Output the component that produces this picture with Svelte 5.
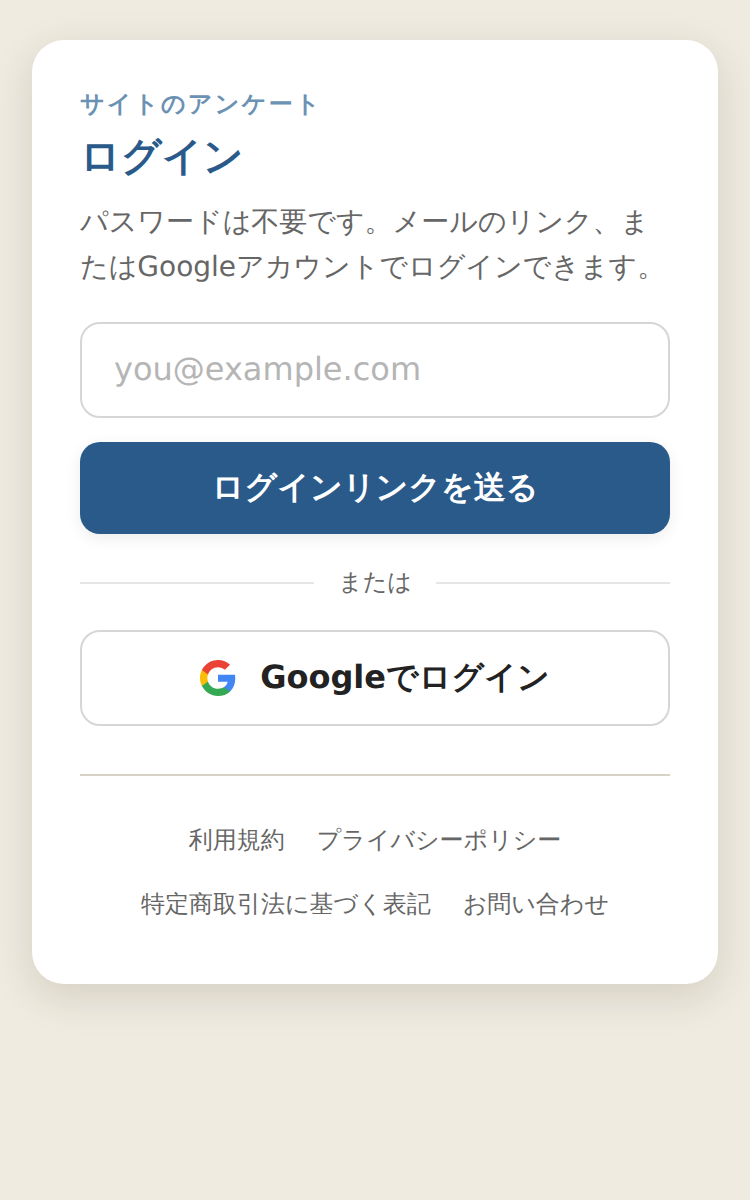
<script>
  const rows = [
    ['利用規約', 'プライバシーポリシー'],
    ['特定商取引法に基づく表記', 'お問い合わせ']
  ];
</script>

<main class="card">
  <p class="eyebrow">サイトのアンケート</p>
  <h1>ログイン</h1>
  <p class="lead">パスワードは不要です。メールのリンク、またはGoogleアカウントでログインできます。</p>
  <form class="form" onsubmit={(e) => e.preventDefault()}>
    <input type="email" placeholder="you@example.com" />
    <button class="primary" type="submit">ログインリンクを送る</button>
  </form>
  <div class="divider"><span>または</span></div>
  <button class="google" type="button">
    <svg viewBox="0 0 18 18" width="36" height="36" aria-hidden="true">
      <path fill="#4285F4" d="M17.64 9.2c0-.637-.057-1.251-.164-1.84H9v3.481h4.844c-.209 1.125-.843 2.078-1.796 2.717v2.258h2.908c1.702-1.567 2.684-3.874 2.684-6.615z"/>
      <path fill="#34A853" d="M9 18c2.43 0 4.467-.806 5.956-2.18l-2.908-2.259c-.806.54-1.837.86-3.048.86-2.344 0-4.328-1.584-5.036-3.711H.957v2.332C2.438 15.983 5.482 18 9 18z"/>
      <path fill="#FBBC05" d="M3.964 10.71c-.18-.54-.282-1.117-.282-1.71s.102-1.17.282-1.71V4.958H.957C.347 6.173 0 7.548 0 9s.348 2.827.957 4.042l3.007-2.332z"/>
      <path fill="#EA4335" d="M9 3.58c1.321 0 2.508.454 3.44 1.345l2.582-2.58C13.463.891 11.426 0 9 0 5.482 0 2.438 2.017.957 4.958L3.964 7.29C4.672 5.163 6.656 3.58 9 3.58z"/>
    </svg>
    <span>Googleでログイン</span>
  </button>
  <footer>
    {#each rows as row}
      <nav>
        {#each row as link}<a href="#top">{link}</a>{/each}
      </nav>
    {/each}
  </footer>
</main>

<style>
  :global(body) {
    margin: 0;
    background: #efebe0;
  }
  :global(#app) {
    min-height: 1200px;
    box-sizing: border-box;
    padding: 40px 32px;
  }
  .card {
    box-sizing: border-box;
    background: #fff;
    border-radius: 32px;
    padding: 48px;
    box-shadow: 0 12px 40px rgba(60, 50, 30, 0.15);
    font-family: "DejaVu Sans", sans-serif;
    text-rendering: geometricPrecision;
  }
  .eyebrow {
    margin: 0 0 11px;
    font-size: 24px;
    line-height: 32px;
    font-weight: 600;
    letter-spacing: 2.4px;
    color: #6b91b3;
  }
  h1 {
    margin: 0 0 16px;
    font-size: 40px;
    line-height: 52px;
    font-weight: 700;
    color: #2a5a8a;
  }
  .lead {
    margin: 0 0 33px;
    font-size: 28px;
    line-height: 45px;
    color: #666;
  }
  .form {
    display: flex;
    flex-direction: column;
    gap: 24px;
  }
  input {
    box-sizing: border-box;
    width: 100%;
    height: 96px;
    padding: 0 32px 2px;
    border: 2px solid #d6d6d6;
    border-radius: 20px;
    background: #fff;
    font: 32px "DejaVu Sans", sans-serif;
    color: #222;
    text-rendering: geometricPrecision;
  }
  input::placeholder {
    color: #b5b5b5;
    opacity: 1;
  }
  button {
    font-family: inherit;
    font-size: 32px;
    font-weight: 700;
    border-radius: 20px;
    width: 100%;
    cursor: pointer;
    text-rendering: geometricPrecision;
  }
  .primary {
    height: 92px;
    border: 0;
    background: #2a5a8a;
    color: #fff;
    box-shadow: 0 4px 16px rgba(0, 0, 0, 0.08);
  }
  .divider {
    display: flex;
    align-items: center;
    gap: 24px;
    margin: 31px 0 29px;
    font-size: 24px;
    line-height: 34px;
    color: #666;
  }
  .divider span {
    margin-bottom: 2px;
  }
  .divider::before,
  .divider::after {
    content: "";
    flex: 1;
    height: 2px;
    background: #e6e6e6;
  }
  .google {
    box-sizing: border-box;
    height: 96px;
    display: flex;
    align-items: center;
    justify-content: center;
    gap: 24px;
    background: #fff;
    border: 2px solid #d6d6d6;
    color: #222;
  }
  footer {
    margin-top: 48px;
    padding: 47px 0 15px;
    border-top: 2px solid #d6d2c4;
    display: flex;
    flex-direction: column;
    gap: 30px;
  }
  nav {
    display: flex;
    justify-content: center;
    gap: 32px;
    font-size: 24px;
    line-height: 34px;
  }
  a {
    color: #666;
    text-decoration: none;
  }
</style>
